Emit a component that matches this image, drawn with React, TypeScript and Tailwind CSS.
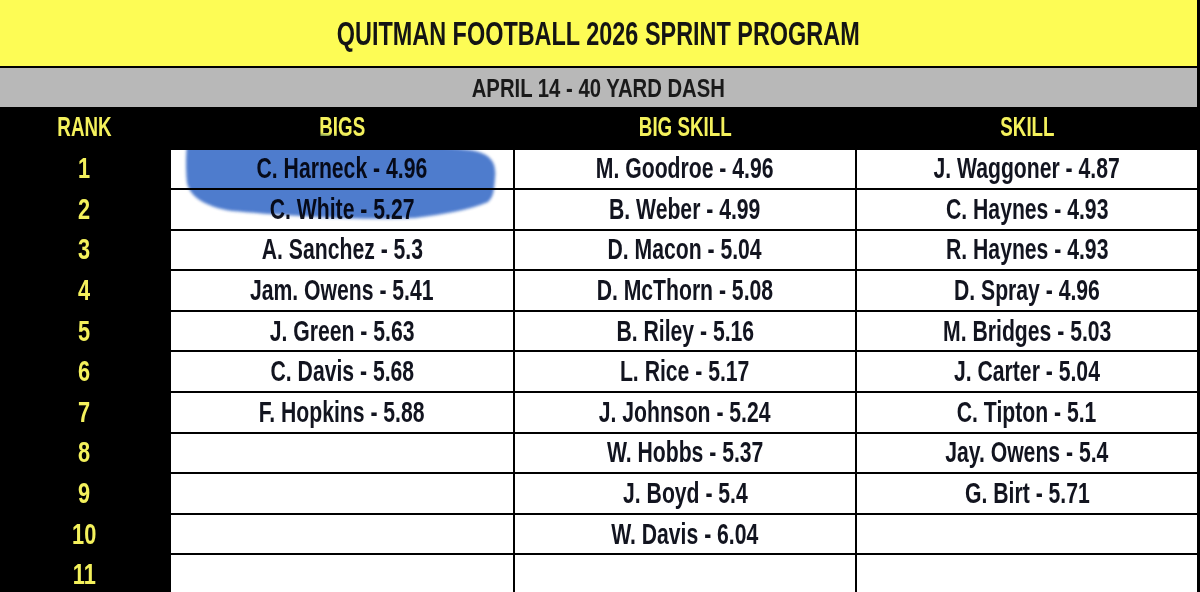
import React from "react";

const rows = [
  ["C. Harneck - 4.96", "M. Goodroe - 4.96", "J. Waggoner - 4.87"],
  ["C. White - 5.27", "B. Weber - 4.99", "C. Haynes - 4.93"],
  ["A. Sanchez - 5.3", "D. Macon - 5.04", "R. Haynes - 4.93"],
  ["Jam. Owens - 5.41", "D. McThorn - 5.08", "D. Spray - 4.96"],
  ["J. Green - 5.63", "B. Riley - 5.16", "M. Bridges - 5.03"],
  ["C. Davis - 5.68", "L. Rice - 5.17", "J. Carter - 5.04"],
  ["F. Hopkins - 5.88", "J. Johnson - 5.24", "C. Tipton - 5.1"],
  ["", "W. Hobbs - 5.37", "Jay. Owens - 5.4"],
  ["", "J. Boyd - 5.4", "G. Birt - 5.71"],
  ["", "W. Davis - 6.04", ""],
  ["", "", ""],
];

const headers = ["RANK", "BIGS", "BIG SKILL", "SKILL"];

const App = () => {
  return (
    <div className="relative w-[1200px] h-[592px] overflow-hidden bg-white font-['Liberation_Sans',Arial,sans-serif] font-bold">
      {/* ---------- TITLE ---------- */}
      <div className="h-[68px] bg-[#fdfc55] border-b-2 border-r-[3px] border-black flex items-center justify-center">
        <span className="inline-block text-[33px] leading-none text-[#141414] scale-x-[0.71] whitespace-nowrap">
          QUITMAN FOOTBALL 2026 SPRINT PROGRAM
        </span>
      </div>

      {/* ---------- SUB TITLE ---------- */}
      <div className="h-[39px] bg-[#b8b8b8] border-r-[3px] border-black flex items-center justify-center">
        <span className="inline-block text-[26px] leading-none text-[#1a1a1a] scale-x-[0.78] whitespace-nowrap">
          APRIL 14 - 40 YARD DASH
        </span>
      </div>

      {/* ---------- TABLE ---------- */}
      <div className="grid grid-cols-[169px_342px_340px_1fr] grid-rows-[40.5px] auto-rows-[38.6px] gap-x-[2px] gap-y-[2px] bg-black pr-[3px]">
        {headers.map((h) => (
          <div key={h} className="bg-black flex items-center justify-center">
            <span className="inline-block text-[28px] leading-none text-[#f4f15c] scale-x-[0.67] whitespace-nowrap">
              {h}
            </span>
          </div>
        ))}

        {rows.map((row, i) => (
          <React.Fragment key={i}>
            <div className="bg-black flex items-center justify-center">
              <span className="inline-block text-[29px] leading-none text-[#f4f15c] scale-x-[0.75]">
                {i + 1}
              </span>
            </div>
            {row.map((cell, j) => (
              <div key={j} className="bg-white flex items-center justify-center">
                <span className="inline-block text-[29px] leading-none text-[#12141f] scale-x-[0.73] whitespace-nowrap">
                  {cell}
                </span>
              </div>
            ))}
          </React.Fragment>
        ))}
      </div>

      {/* highlighter stroke */}
      <svg
        className="absolute inset-0 pointer-events-none mix-blend-multiply"
        width="1200"
        height="592"
        viewBox="0 0 1200 592"
      >
        <defs>
          <filter id="soft" x="-10%" y="-30%" width="120%" height="160%">
            <feGaussianBlur stdDeviation="1.6" />
          </filter>
        </defs>
        <path
          d="M192,123 C260,128 380,140 470,150 C490,153 497,162 495,178 C494,190 494,196 488,202 C470,210 445,214 415,218 C360,221 280,215 232,211 C206,207 190,197 187,183 C185,165 186,135 192,123 Z"
          fill="#4474cb"
          opacity="0.95"
          filter="url(#soft)"
        />
      </svg>
    </div>
  );
};

export default App;
